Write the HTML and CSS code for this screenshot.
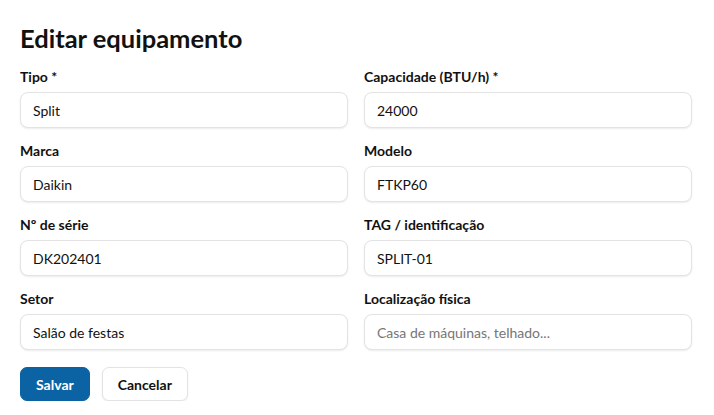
FILE: index.html
```html
<!DOCTYPE html>
<html lang="pt-BR">
<head>
<meta charset="UTF-8" />
<meta name="viewport" content="width=device-width, initial-scale=1.0" />
<title>Editar equipamento</title>
<link rel="stylesheet" href="styles.css">
</head>
<body>
<main class="page">
  <h1>Editar equipamento</h1>
  <form id="equipForm" class="equip-form" novalidate>
    <div class="form-grid">
      <div class="field">
        <label for="tipo">Tipo *</label>
        <input type="text" id="tipo" value="Split" />
      </div>
      <div class="field">
        <label for="capacidade">Capacidade (BTU/h) *</label>
        <input type="text" id="capacidade" value="24000" />
      </div>
      <div class="field">
        <label for="marca">Marca</label>
        <input type="text" id="marca" value="Daikin" />
      </div>
      <div class="field">
        <label for="modelo">Modelo</label>
        <input type="text" id="modelo" value="FTKP60" />
      </div>
      <div class="field">
        <label for="serie">Nº de série</label>
        <input type="text" id="serie" value="DK202401" />
      </div>
      <div class="field">
        <label for="tag">TAG / identificação</label>
        <input type="text" id="tag" value="SPLIT-01" />
      </div>
      <div class="field">
        <label for="setor">Setor</label>
        <input type="text" id="setor" value="Salão de festas" />
      </div>
      <div class="field">
        <label for="local">Localização física</label>
        <input type="text" id="local" placeholder="Casa de máquinas, telhado..." />
      </div>
    </div>
    <div class="actions">
      <button type="submit" class="btn btn-primary">Salvar</button>
      <button type="button" class="btn btn-secondary">Cancelar</button>
    </div>
  </form>
</main>
</body>
</html>
```

FILE: styles.css
```css
* {
  box-sizing: border-box;
}
body {
  margin: 0;
  padding: 0;
  font-family: Lato, 'Open Sans', sans-serif;
  background: #fff;
  color: #111;
}
.page {
  width: 714px;
  padding: 22px 22px 0 20px;
}
h1 {
  margin: 0 0 14px 0;
  font-size: 25.5px;
  line-height: 32px;
  font-weight: 700;
  color: #111;
}
.form-grid {
  display: grid;
  grid-template-columns: 1fr 1fr;
  column-gap: 16px;
  row-gap: 14px;
}
.field label {
  display: block;
  font-size: 14px;
  line-height: 18px;
  font-weight: 700;
  color: #111;
  margin-bottom: 6px;
}
.field input {
  width: 100%;
  height: 36px;
  padding: 0 12px;
  font-family: inherit;
  font-size: 14px;
  color: #111;
  background: #fff;
  border: 1px solid #e3e3e3;
  border-radius: 8px;
  box-shadow: 0 1px 2px rgba(0, 0, 0, 0.08);
  outline: none;
}
.field input::placeholder {
  color: #767676;
}
.actions {
  display: flex;
  gap: 12px;
  margin-top: 17px;
}
.btn {
  height: 34px;
  padding: 0 15px;
  font-family: inherit;
  font-size: 14px;
  font-weight: 700;
  border-radius: 7px;
  cursor: pointer;
}
.btn-primary {
  background: #0b63a3;
  color: #fff;
  border: 1px solid #0b63a3;
}
.btn-secondary {
  background: #fff;
  color: #111;
  border: 1px solid #e3e3e3;
  box-shadow: 0 1px 2px rgba(0, 0, 0, 0.08);
}
```
